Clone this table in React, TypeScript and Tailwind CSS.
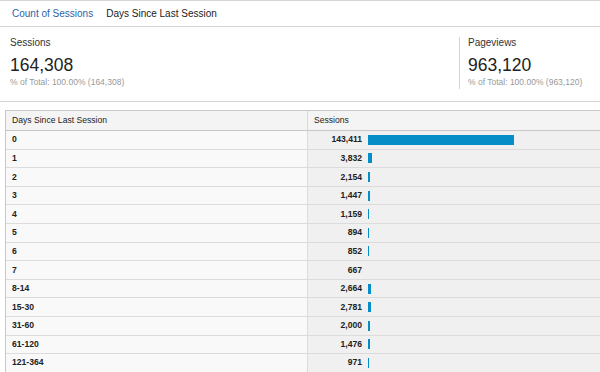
import React from "react";

type Row = { label: string; sessions: string; bar: number };

const rows: Row[] = [
  { label: "0", sessions: "143,411", bar: 146 },
  { label: "1", sessions: "3,832", bar: 4 },
  { label: "2", sessions: "2,154", bar: 2 },
  { label: "3", sessions: "1,447", bar: 2 },
  { label: "4", sessions: "1,159", bar: 1 },
  { label: "5", sessions: "894", bar: 1 },
  { label: "6", sessions: "852", bar: 1 },
  { label: "7", sessions: "667", bar: 0 },
  { label: "8-14", sessions: "2,664", bar: 3 },
  { label: "15-30", sessions: "2,781", bar: 3 },
  { label: "31-60", sessions: "2,000", bar: 2 },
  { label: "61-120", sessions: "1,476", bar: 2 },
  { label: "121-364", sessions: "971", bar: 1 },
];

function Metric({ label, value, total }: { label: string; value: string; total: string }) {
  return (
    <div className="flex flex-col">
      <div className="text-[10px] leading-[12px] text-[#333]">{label}</div>
      <div className="mt-[6px] text-[17.5px] leading-[20px] text-[#222]">{value}</div>
      <div className="mt-[2px] text-[8.5px] leading-[10px] text-[#999]">
        % of Total: 100.00% ({total})
      </div>
    </div>
  );
}

export default function App() {
  return (
    <div
      className="w-[600px] h-[372px] overflow-hidden bg-white"
      style={{ fontFamily: '"Liberation Sans", Arial, sans-serif' }}
    >
      {/* tab strip */}
      <div className="flex h-[27px] items-center border-y border-[#d4d4d4] text-[10px]">
        <div className="pl-[12px] text-[#2f62a8]">Count of Sessions</div>
        <div className="pl-[13px] text-[#222]">Days Since Last Session</div>
      </div>

      {/* scorecards */}
      <div className="flex border-b border-[#d4d4d4] pt-[10px] pb-[12px]">
        <div className="w-[459px] pl-[10px]">
          <Metric label="Sessions" value="164,308" total="164,308" />
        </div>
        <div className="border-l border-[#d4d4d4] pl-[8px] pb-[2px]">
          <Metric label="Pageviews" value="963,120" total="963,120" />
        </div>
      </div>

      {/* data table */}
      <div className="ml-[5px] mt-[8px] border-l border-[#c8c8c8] text-[8.6px] text-[#222]">
        <div className="flex h-[21px] items-center border-y border-[#c8c8c8] bg-[#f4f4f4]">
          <div className="flex h-full w-[302px] items-center border-r border-[#d8d8d8] pl-[6px]">
            Days Since Last Session
          </div>
          <div className="pl-[6px]">Sessions</div>
        </div>
        {rows.map((r) => (
          <div key={r.label} className="flex h-[18.6px] border-b border-[#dcdcdc]">
            <div className="flex w-[302px] items-center border-r border-[#dcdcdc] bg-[#f9f9f9] pl-[6px] font-bold">
              {r.label}
            </div>
            <div className="flex flex-1 items-center bg-[#f0f0f0]">
              <div className="w-[54px] text-right font-bold">{r.sessions}</div>
              <div className="ml-[6px] h-[10px] bg-[#058dc7]" style={{ width: r.bar }} />
            </div>
          </div>
        ))}
      </div>
    </div>
  );
}
